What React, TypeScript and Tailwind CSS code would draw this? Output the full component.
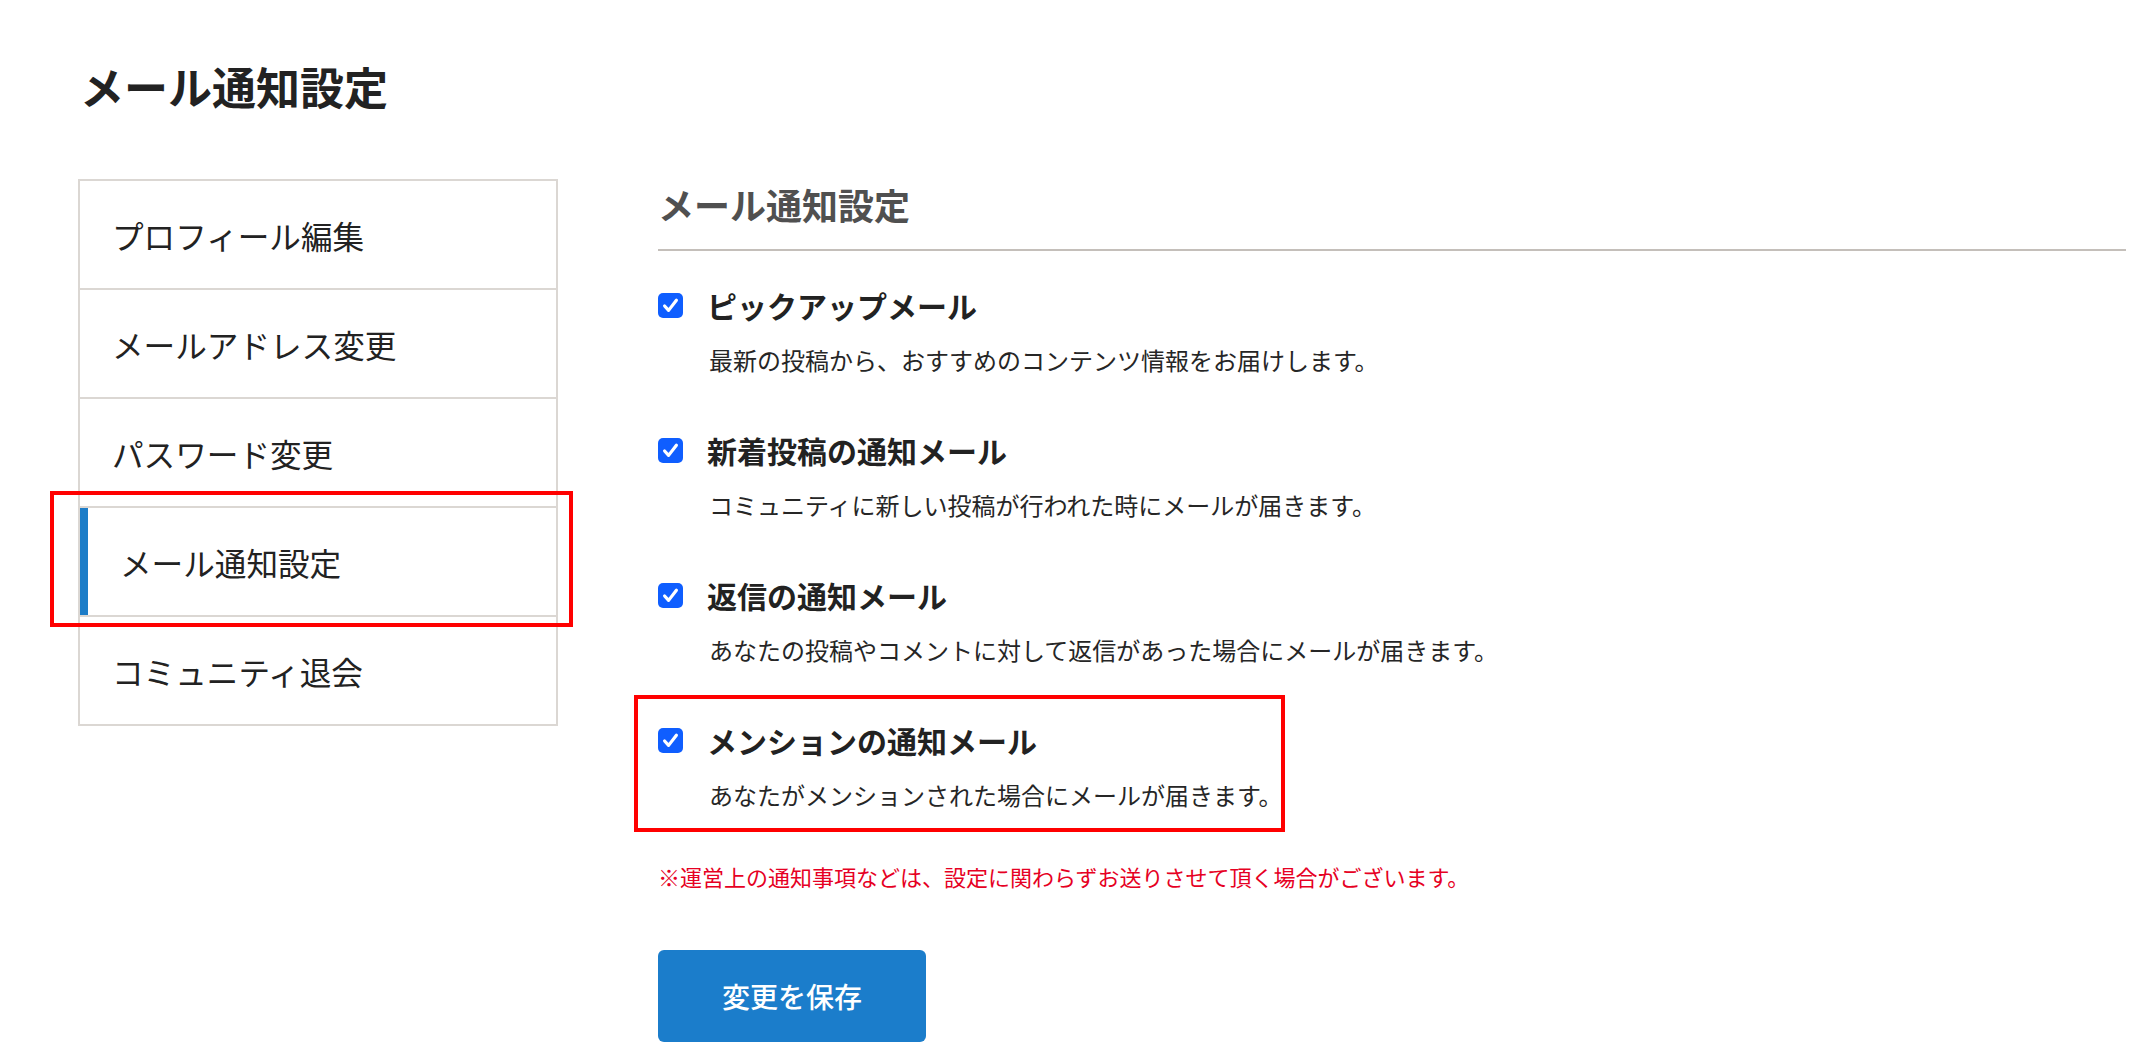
import React from "react";

const navItems = [
  "プロフィール編集",
  "メールアドレス変更",
  "パスワード変更",
  "メール通知設定",
  "コミュニティ退会",
];

const options = [
  {
    title: "ピックアップメール",
    desc: "最新の投稿から、おすすめのコンテンツ情報をお届けします。",
  },
  {
    title: "新着投稿の通知メール",
    desc: "コミュニティに新しい投稿が行われた時にメールが届きます。",
  },
  {
    title: "返信の通知メール",
    desc: "あなたの投稿やコメントに対して返信があった場合にメールが届きます。",
  },
  {
    title: "メンションの通知メール",
    desc: "あなたがメンションされた場合にメールが届きます。",
  },
];

function CheckBox() {
  return (
    <span
      role="checkbox"
      aria-checked="true"
      className="flex h-[25px] w-[25px] shrink-0 items-center justify-center rounded-[5px] bg-[#0f5eff]"
    >
      <svg width="19" height="19" viewBox="0 0 19 19" fill="none">
        <path
          d="M3.6 10 L7.6 14.4 L15.4 4.2"
          stroke="white"
          strokeWidth="3.2"
          strokeLinecap="round"
          strokeLinejoin="round"
        />
      </svg>
    </span>
  );
}

export default function App() {
  return (
    <div className="min-h-screen bg-white pl-[78px] pt-[56px] font-['Noto_Sans_CJK_JP','Noto_Sans',sans-serif] text-[#222]">
      <h1 className="pl-[2px] text-[44px] font-bold leading-[60px] text-[#222]">メール通知設定</h1>

      <div className="mt-[63px] flex items-start">
        <aside className="w-[480px] shrink-0 border-2 border-b-0 border-[#dbd7d3]">
          {navItems.map((item, i) =>
            i === 3 ? (
              <div key={item} className="relative h-[109px] border-b-2 border-[#dbd7d3]">
                <div className="flex h-full items-center border-l-8 border-[#1d7dc8] pl-[32px] text-[31.6px] leading-[44px] text-[#222]">
                  {item}
                </div>
                <div className="pointer-events-none absolute left-[-30px] top-[-17px] h-[136px] w-[523px] border-4 border-[#ff0000]" />
              </div>
            ) : (
              <div
                key={item}
                className="flex h-[109px] items-center border-b-2 border-[#dbd7d3] pl-[32px] text-[31.6px] leading-[44px] text-[#222]"
              >
                {item}
              </div>
            )
          )}
        </aside>

        <main className="ml-[100px] mr-[18px] flex-1">
          <h2 className="border-b-2 border-[#c4bfba] pb-[20px] text-[36px] font-bold leading-[50px] text-[#505050]">
            メール通知設定
          </h2>

          <div className="mt-[34px] flex flex-col gap-[53px]">
            {options.map((opt, i) => (
              <div key={opt.title} className="relative">
                <label className="flex h-[40px] items-center gap-[24px]">
                  <CheckBox />
                  <span className="text-[30px] font-bold leading-[40px] text-[#222]">{opt.title}</span>
                </label>
                <p className="mt-[18px] pl-[51px] text-[24px] leading-[34px] text-[#262626]">{opt.desc}</p>
                {i === 3 && (
                  <div className="pointer-events-none absolute left-[-24px] top-[-25px] h-[137px] w-[651px] border-4 border-[#ff0000]" />
                )}
              </div>
            ))}
          </div>

          <p className="mt-[48px] text-[22px] leading-[32px] text-[#e60023]">
            ※運営上の通知事項などは、設定に関わらずお送りさせて頂く場合がございます。
          </p>

          <button
            type="button"
            className="mt-[58px] flex h-[92px] w-[268px] items-center justify-center rounded-[6px] bg-[#1b7dcb] text-[28px] font-medium text-white"
          >
            変更を保存
          </button>
        </main>
      </div>
    </div>
  );
}
